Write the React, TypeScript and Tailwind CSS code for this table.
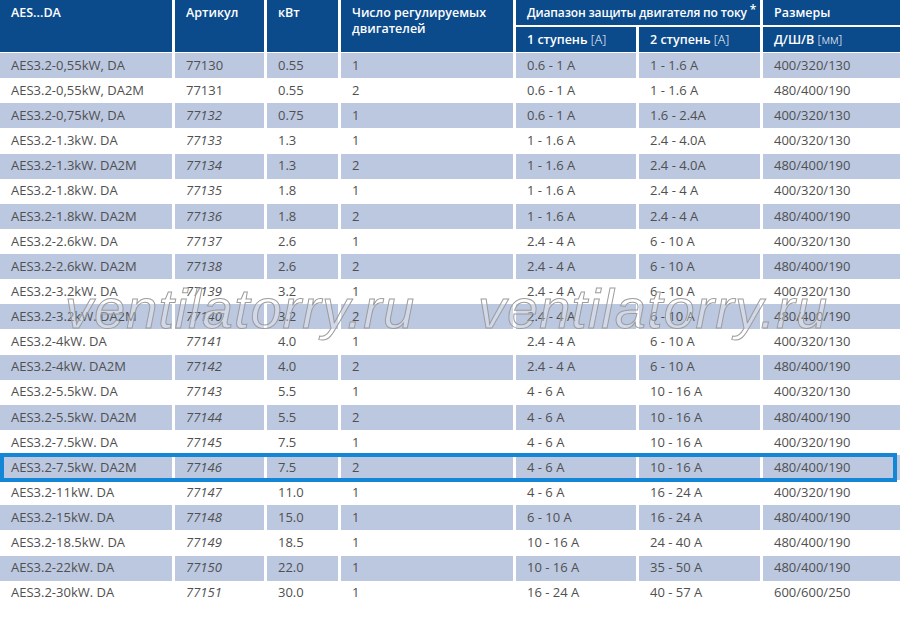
const rows = [
  ['AES3.2-0,55kW, DA', '77130', '0.55', '1', '0.6 - 1 A', '1 - 1.6 A', '400/320/130'],
  ['AES3.2-0,55kW, DA2M', '77131', '0.55', '2', '0.6 - 1 A', '1 - 1.6 A', '480/400/190'],
  ['AES3.2-0,75kW, DA', '77132', '0.75', '1', '0.6 - 1 A', '1.6 - 2.4A', '400/320/130'],
  ['AES3.2-1.3kW. DA', '77133', '1.3', '1', '1 - 1.6 A', '2.4 - 4.0A', '400/320/130'],
  ['AES3.2-1.3kW. DA2M', '77134', '1.3', '2', '1 - 1.6 A', '2.4 - 4.0A', '480/400/190'],
  ['AES3.2-1.8kW. DA', '77135', '1.8', '1', '1 - 1.6 A', '2.4 - 4 A', '400/320/130'],
  ['AES3.2-1.8kW. DA2M', '77136', '1.8', '2', '1 - 1.6 A', '2.4 - 4 A', '480/400/190'],
  ['AES3.2-2.6kW. DA', '77137', '2.6', '1', '2.4 - 4 A', '6 - 10 A', '400/320/130'],
  ['AES3.2-2.6kW. DA2M', '77138', '2.6', '2', '2.4 - 4 A', '6 - 10 A', '480/400/190'],
  ['AES3.2-3.2kW. DA', '77139', '3.2', '1', '2.4 - 4 A', '6 - 10 A', '400/320/130'],
  ['AES3.2-3.2kW. DA2M', '77140', '3.2', '2', '2.4 - 4 A', '6 - 10 A', '480/400/190'],
  ['AES3.2-4kW. DA', '77141', '4.0', '1', '2.4 - 4 A', '6 - 10 A', '400/320/130'],
  ['AES3.2-4kW. DA2M', '77142', '4.0', '2', '2.4 - 4 A', '6 - 10 A', '480/400/190'],
  ['AES3.2-5.5kW. DA', '77143', '5.5', '1', '4 - 6 A', '10 - 16 A', '400/320/130'],
  ['AES3.2-5.5kW. DA2M', '77144', '5.5', '2', '4 - 6 A', '10 - 16 A', '480/400/190'],
  ['AES3.2-7.5kW. DA', '77145', '7.5', '1', '4 - 6 A', '10 - 16 A', '400/320/190'],
  ['AES3.2-7.5kW. DA2M', '77146', '7.5', '2', '4 - 6 A', '10 - 16 A', '480/400/190'],
  ['AES3.2-11kW. DA', '77147', '11.0', '1', '4 - 6 A', '16 - 24 A', '400/320/190'],
  ['AES3.2-15kW. DA', '77148', '15.0', '1', '6 - 10 A', '16 - 24 A', '480/400/190'],
  ['AES3.2-18.5kW. DA', '77149', '18.5', '1', '10 - 16 A', '24 - 40 A', '480/400/190'],
  ['AES3.2-22kW. DA', '77150', '22.0', '1', '10 - 16 A', '35 - 50 A', '480/400/190'],
  ['AES3.2-30kW. DA', '77151', '30.0', '1', '16 - 24 A', '40 - 57 A', '600/600/250'],
];

const cols = 'grid grid-cols-[172px_89px_71px_172px_120px_121px_137px] gap-x-[3px]';
const head = 'bg-[#0b4a8b] text-white font-semibold pl-[11px] pt-[5px] leading-[16px] whitespace-nowrap overflow-hidden';

function Watermark({ left }: { left: string }) {
  return (
    <div
      className={`pointer-events-none absolute top-[281px] ${left} text-[56px] leading-none italic tracking-[1px] text-white/30 [-webkit-text-stroke:1px_#9c9c9c]`}
      style={{ fontFamily: '"Liberation Sans", Arial, sans-serif' }}
    >
      ventilatorry.ru
    </div>
  );
}

export default function App() {
  return (
    <div
      className="relative h-[618px] w-[900px] overflow-hidden bg-white text-[13px] text-[#505050]"
      style={{ fontFamily: '"Open Sans", "Noto Sans", sans-serif' }}
    >
      <div className={`${cols} grid-rows-[25px_25px] gap-y-[2px] text-[12.5px]`}>
        <div className={`${head} row-span-2`}>AES...DA</div>
        <div className={`${head} row-span-2`}>Артикул</div>
        <div className={`${head} row-span-2`}>кВт</div>
        <div className={`${head} row-span-2`}>
          Число регулируемых
          <br />
          двигателей
        </div>
        <div className={`${head} col-span-2 text-[12px] tracking-[-0.15px]`}>
          Диапазон защиты двигателя по току <span className="relative -top-[3px]">*</span>
        </div>
        <div className={head}>Размеры</div>
        <div className={head}>
          1 ступень <span className="font-light">[A]</span>
        </div>
        <div className={head}>
          2 ступень <span className="font-light">[A]</span>
        </div>
        <div className={head}>
          Д/Ш/В <span className="font-light">[мм]</span>
        </div>
      </div>

      <div className="mt-[1px] flex flex-col">
        {rows.map((r, i) => (
          <div key={r[1]} className={`relative ${cols} h-[25.14px]`}>
            {r.map((c, j) => (
              <div
                key={j}
                className={`flex items-center pl-[11px] ${i % 2 === 0 ? 'bg-[#bcc8e0]' : ''} ${j === 1 && i > 1 ? 'italic' : ''}`}
              >
                {c}
              </div>
            ))}
            {r[1] === '77146' && (
              <div className="pointer-events-none absolute -top-[2px] -bottom-[2px] left-0 right-[3px] border-4 border-[#1387d6]" />
            )}
          </div>
        ))}
      </div>

      <Watermark left="left-[65px]" />
      <Watermark left="left-[478px]" />
    </div>
  );
}
